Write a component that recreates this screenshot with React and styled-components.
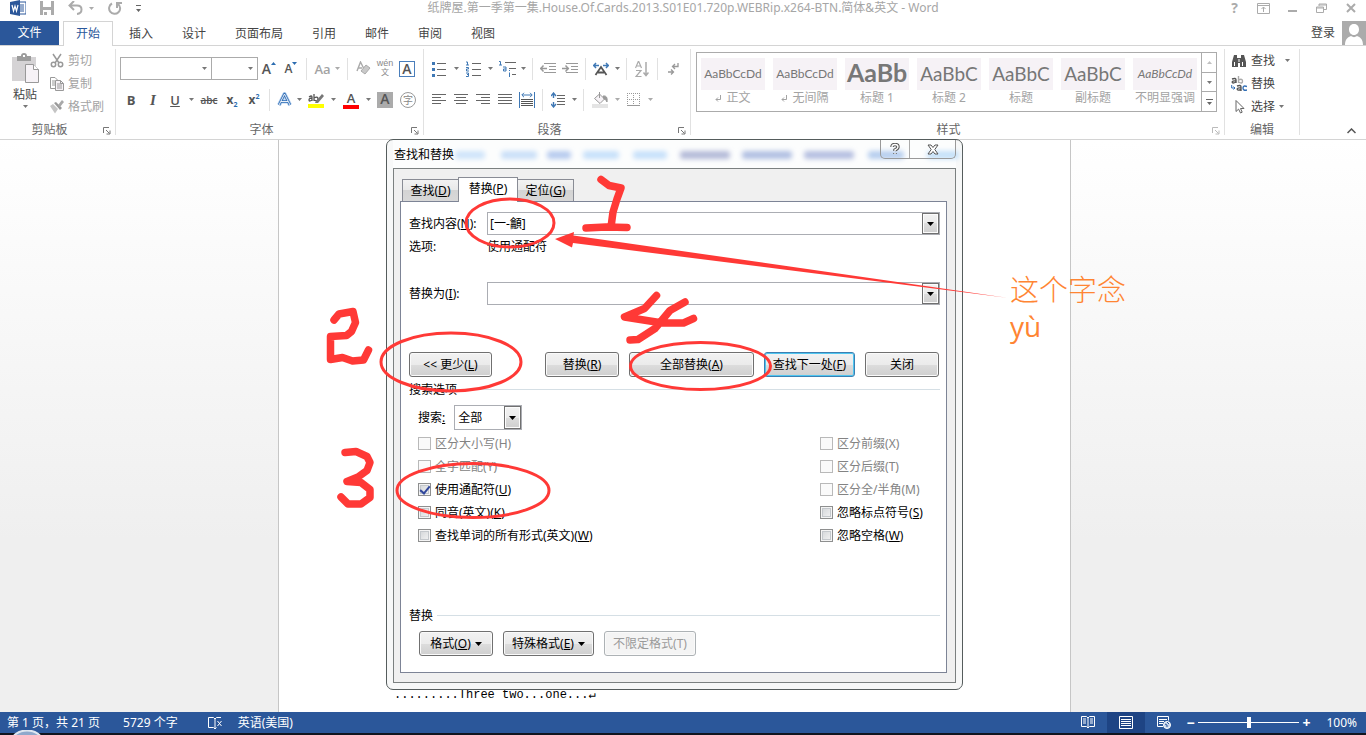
import React from 'react';
import styled, { createGlobalStyle, css } from 'styled-components';

const GlobalStyle = createGlobalStyle`
* {
  box-sizing: border-box;
}

body {
  margin: 0;
  font-family: "Noto Sans", "Noto Sans CJK SC", sans-serif;
  font-size: 12px;
  line-height: 16px;
  color: #444;
  overflow: hidden;
}

button, input, select {
  font: inherit;
  color: inherit;
  margin: 0;
}
`

const Window = styled.div`
display: flex;
flex-direction: column;
height: 100vh;
background: #fff;
`

/* title bar */

const TitleBar = styled.header`
display: grid;
grid-template-columns: 1fr auto 1fr;
align-items: center;
height: 21px;
padding-bottom: 6px;
background: #fff;
`

const QuickAccess = styled.div`
display: flex;
align-items: center;
padding-left: 10px;
gap: 14px;
`

const Title = styled.div`
color: #a6a6a6;
white-space: nowrap;
`

const WindowButtons = styled.div`
display: flex;
justify-content: flex-end;
padding-right: 1px;
`

const PlainButton = styled.button`
display: flex;
align-items: center;
justify-content: ${p => p.$start ? 'flex-start' : 'center'};
gap: ${p => p.$gap || 0}px;
width: ${p => p.$w ? p.$w + 'px' : 'auto'};
height: ${p => p.$h ? p.$h + 'px' : 'auto'};
padding: 0;
border: 0;
background: none;
white-space: nowrap;
color: ${p => p.$off ? '#a3a3a3' : '#444'};

&:hover {
    background: #d5e1f2;
    cursor: pointer;
  }
`

/* tabs */

const TabBar = styled.nav`
display: flex;
align-items: flex-end;
height: 25px;
border-bottom: 1px solid #d4d4d4;
`

const FileTab = styled.button`
width: 59px;
height: 24px;
margin-right: 4px;
padding: 0;
border: 0;
background: #2b579a;
color: #fff;
`

const Tab = styled.button`
height: 25px;
margin: 0 1px -1px 0;
padding: 0 14px;
border: 0;
background: none;
color: #444;

${p => p.$active && css`
  padding: 0 12px;
  margin-right: 2px;
  border: 1px solid #d4d4d4;
  border-bottom: 0;
  background: #fff;
  color: #2b579a;
`}
`

const Account = styled.div`
display: flex;
align-items: center;
gap: 7px;
margin-left: auto;
`

/* ribbon */

const Ribbon = styled.section`
display: flex;
height: 94px;
border-bottom: 1px solid #d4d4d4;
background: #fff;
`

const Group = styled.div`
position: relative;
display: flex;
flex-direction: column;
width: ${p => p.$w}px;
margin: 3px 0 4px;
padding: ${p => p.$pad || '0 4px'};
border-right: 1px solid #e1e1e1;
`

const GroupBody = styled.div`
display: flex;
flex: 1;
flex-direction: ${p => p.$column ? 'column' : 'row'};
gap: ${p => p.$gap || 0}px;
padding-top: ${p => p.$top || 0}px;
`

const GroupName = styled.div`
height: 12px;
line-height: 14px;
text-align: center;
color: #666;
padding-right: ${p => p.$shift || 0}px;
`

const Launcher = styled.button`
position: absolute;
right: 4px;
bottom: 0;
width: 8px;
height: 8px;
padding: 0;
border: 0;
background: none;
display: flex;
color: ${p => p.$off ? '#bbb' : '#777'};
`

const Row = styled.div`
display: flex;
align-items: center;
height: 23px;
`

const Sep = styled.div`
width: 1px;
height: 22px;
margin: 0 4px;
background: #e1e1e1;
`

const Column = styled.div`
display: flex;
flex-direction: column;
`

const PasteButton = styled(PlainButton)`
flex-direction: column;
align-items: center;
justify-content: flex-start;
width: 42px;
padding-top: 4px;
line-height: 20px;
`

const FontSelect = styled.select`
appearance: none;
width: ${p => p.$w}px;
height: 23px;
border: 1px solid #ababab;
border-radius: 0;
background: #fff;
`

const SelectBox = styled.label`
display: grid;
align-items: center;
justify-items: end;
margin-right: ${p => p.$join ? -1 : 0}px;

& > * {
  grid-area: 1 / 1;
}

& > svg {
  margin-right: 5px;
  pointer-events: none;
}
`

const Letter = styled.span`
font-size: ${p => p.$size || 14}px;
font-weight: ${p => p.$bold ? 700 : 600};
font-style: ${p => p.$italic ? 'italic' : 'normal'};
font-family: ${p => p.$serif ? '"Liberation Serif", serif' : '"Open Sans", sans-serif'};
text-decoration: ${p => p.$deco || 'none'};
line-height: 14px;
color: ${p => p.$color || '#555'};
border-bottom: ${p => p.$bar ? '4px solid ' + p.$bar : '0'};
padding: 0 ${p => p.$bar ? 4 : 0}px;

sub, sup {
  font-size: 7px;
  line-height: 0;
  color: #2b6cb0;
}
`

const BoxedA = styled(Letter)`
width: 16px;
height: 16px;
line-height: 14px;
text-align: center;
border: ${p => p.$fill ? '0' : '1px solid #4a7ebb'};
background: ${p => p.$fill || '#fff'};
`

const Circled = styled.span`
width: 16px;
height: 16px;
border: 1px solid #999;
border-radius: 8px;
font-size: 10px;
line-height: 14px;
color: #888;
`

const Pinyin = styled.span`
display: flex;
flex-direction: column;
align-items: center;
font-family: "Liberation Sans", "Noto Sans CJK SC", sans-serif;
font-size: 9px;
line-height: 8px;
color: #888;

span + span {
  font-size: 8px;
  line-height: 12px;
}
`

const Gallery = styled.div`
display: flex;
width: 100%;
height: 60px;
margin-top: 3px;
border: 1px solid #ababab;
`

const StyleItem = styled.button`
display: flex;
flex: 1;
flex-direction: column;
align-items: center;
min-width: 0;
padding: 5px 4px 0;
border: 0;
background: none;
color: #a3a3a3;
line-height: 16px;
white-space: nowrap;
`

const Sample = styled.span`
width: 100%;
height: 32px;
overflow: hidden;
background: #f6f2f6;
color: #777;
font-family: Lato, "Open Sans", sans-serif;
line-height: ${p => p.$size > 20 ? 28 : 32}px;
font-size: ${p => p.$size || 12}px;
font-weight: ${p => p.$bold ? 700 : 400};
font-style: ${p => p.$italic ? 'italic' : 'normal'};
`

const GalleryScroll = styled.div`
display: flex;
flex-direction: column;
width: 15px;
border-left: 1px solid #ababab;

button {
  flex: 1;
  border-bottom: 1px solid #ababab;
}

button:last-child {
  border-bottom: 0;
}
`

const Collapse = styled.div`
display: flex;
flex: 1;
align-items: flex-end;
justify-content: flex-end;
padding: 0 10px 5px;
`

/* document */

const Workspace = styled.main`
position: relative;
display: flex;
flex: 1;
justify-content: center;
padding-right: 17px;
background: linear-gradient(#fff, #efefef 70%);
`

const Page = styled.article`
display: flex;
align-items: flex-end;
width: 58%;
min-width: 793px;
padding: 0 115px 9px;
border: 1px solid #c6c6c6;
border-width: 0 1px;
background: #fff;
color: #000;
font-family: "Liberation Mono", monospace;
line-height: 16px;
`

/* find and replace */

const Dialog = styled.div`
position: absolute;
top: -1px;
width: 577px;
padding: 0 6px 6px;
border: 1px solid #555c5c;
border-radius: 7px;
background: #f7f8f8;
color: #000;
`

const DialogTitle = styled.div`
display: flex;
align-items: flex-start;
justify-content: space-between;
height: 28px;
background: #fcfdfd;
`

const DialogName = styled.h1`
position: relative;
margin: 7px 0 0 1px;
font-size: 12px;
font-weight: 400;
line-height: 16px;
`

const Haze = styled.svg`
position: absolute;
left: 64px;
top: 4px;
`

const CaptionButtons = styled.div`
position: relative;
display: flex;
height: 19px;
border: 1px solid #999;
border-top: 0;
border-radius: 0 0 5px 5px;

button {
  width: 28px;
}

button + button {
  width: 46px;
  border-left: 1px solid #aaa;
}
`

const DialogBody = styled.div`
padding: 8px 8px 9px 6px;
border: 1px solid #7b8080;
background: #f0f0f0;
`

const DialogTabs = styled.div`
display: flex;
align-items: flex-end;
height: 24px;
padding-left: 2px;
`

const DialogTab = styled.button`
height: 22px;
width: 56px;
padding: 0;
border: 1px solid #898c95;
border-left-width: ${p => p.$last ? 0 : 1}px;
border-right-width: ${p => p.$last ? 1 : 0}px;
border-bottom: 0;
background: linear-gradient(#f2f2f2, #e8e8e8 50%, #d4d4d4 50%, #d8d8d8);

${p => p.$active && css`
  width: 60px;
  height: 25px;
  margin-bottom: -1px;
  padding-bottom: 2px;
  border-width: 1px 1px 0;
  background: #fff;
  z-index: 1;
`}
`

const Panel = styled.div`
padding: 10px 6px 16px 8px;
border: 1px solid #7d8496;
background: #fff;
`

const Field = styled.div`
display: flex;
align-items: center;
height: 23px;
margin-top: ${p => p.$top || 0}px;

& > label, & > span:first-child {
  width: 78px;
}
`

const ComboBox = styled.div`
display: flex;
flex: 1;
height: 23px;
border: 1px solid #abadb3;

input {
  flex: 1;
  min-width: 0;
  padding: 0 2px;
  border: 0;
  outline: 0;
}
`

const dropFace = css`
display: flex;
align-items: center;
justify-content: center;
width: 17px;
padding: 0;
border: 1px solid #707070;
background: linear-gradient(#f2f2f2, #ebebeb 50%, #dddddd 50%, #cfcfcf);
box-shadow: inset 0 0 0 1px #fcfcfc;
`

const DropButton = styled.button`
${dropFace}
`

const Buttons = styled.div`
display: flex;
gap: 10px;
margin: ${p => p.$m};
`

const PushButton = styled.button`
display: flex;
align-items: center;
justify-content: center;
gap: 4px;
width: ${p => p.$w}px;
height: 25px;
padding: 0;
border: 1px solid #707070;
border-radius: 3px;
background: linear-gradient(#f2f2f2, #ebebeb 50%, #dddddd 50%, #cfcfcf);
box-shadow: inset 0 0 0 1px ${p => p.$main ? '#4fc6f0' : '#fafafa'};
border-color: ${p => p.$main ? '#3c7fb1' : '#707070'};
margin-right: ${p => p.$push ? 'auto' : 0};

&:disabled {
  border-color: #adb2b5;
  background: #f4f4f4;
  color: #9a9a9a;
}
`

const Legend = styled.h2`
display: flex;
align-items: center;
gap: ${p => p.$gap || 0}px;
margin: ${p => p.$top}px 0 0;
font-size: 12px;
font-weight: 400;
line-height: 13px;

&:after {
  content: "";
  flex: 1;
  height: 1px;
  background: #d5dfe5;
}
`

const SearchRow = styled.div`
display: flex;
align-items: center;
gap: 9px;
margin: 9px 0 2px 9px;
`

const SearchSelect = styled.div`
display: grid;
height: 25px;
border: 1px solid #abadb3;

& > * {
  grid-area: 1 / 1;
}

select {
  appearance: none;
  width: 66px;
  padding: 0 3px;
  border: 0;
  background: #fff;
}
`

const SelectArrow = styled.span`
${dropFace}
justify-self: end;
pointer-events: none;
`

const Checks = styled.div`
display: grid;
grid-template-columns: 1fr 120px;
margin-left: 9px;
`

const CheckLabel = styled.label`
display: flex;
align-items: center;
gap: 4px;
height: 23px;
color: ${p => p.$off ? '#838383' : '#000'};
`

const CheckInput = styled.input`
appearance: none;
display: grid;
place-items: center;
width: 13px;
height: 13px;
border: 1px solid #8e8f8f;
background: linear-gradient(135deg, #d0d3d6, #f6f6f6);
box-shadow: inset 0 0 0 1px #f4f4f4, inset 0 0 0 2px #c4c8cc;

&:disabled {
  border-color: #b9b9b9;
  background: #fafafa;
  box-shadow: none;
}

&:checked:after {
  content: "";
  width: 4px;
  height: 8px;
  margin-top: -2px;
  border: solid #31479c;
  border-width: 0 2px 2px 0;
  transform: rotate(40deg);
}
`

/* pen marks */

const Ink = styled.svg`
position: absolute;
left: 0;
top: 0;
overflow: visible;
pointer-events: none;
z-index: 2;
`

const Note = styled.div`
position: absolute;
left: 623px;
top: 132px;
font-size: 29px;
font-weight: 300;
line-height: 36px;
white-space: nowrap;
color: #ff8533;

span {
  display: block;
  font-family: "Open Sans", sans-serif;
  font-size: 28px;
  font-weight: 400;
}
`

/* status bar */

const StatusBar = styled.footer`
position: relative;
display: flex;
align-items: center;
justify-content: space-between;
height: 23px;
padding: 0 9px 0 7px;
border-bottom: 2px solid #10151f;
background: #2b579a;
color: #fff;
`

const StatusSide = styled.div`
display: flex;
align-items: center;
height: 21px;
gap: ${p => p.$gap || 0}px;
`

const ViewButton = styled.button`
display: flex;
align-items: center;
justify-content: center;
width: 38px;
height: 21px;
padding: 0;
border: 0;
background: ${p => p.$active ? '#1e4484' : 'none'};
`

const ZoomButton = styled.button`
width: 15px;
padding: 0;
border: 0;
background: none;
font-size: 14px;
font-weight: 700;
line-height: 16px;
color: #fff;
`

const ZoomSlider = styled.input`
appearance: none;
width: 101px;
height: 12px;
background: linear-gradient(#fff, #fff) center / 100% 1px no-repeat;

&::-webkit-slider-thumb {
  appearance: none;
  width: 4px;
  height: 11px;
  background: #fff;
}
`

const ZoomValue = styled.span`
width: 43px;
text-align: right;
`

const Orb = styled.svg`
position: absolute;
left: 12px;
bottom: -2px;
`

const Icon = ({ w = 16, h = 16, children, ...rest }) => (
    <svg width={w} height={h} viewBox={`0 0 ${w} ${h}`} fill="none" stroke="currentColor" aria-hidden="true" {...rest}>
        {children}
    </svg>
)

const Caret = ({ color = '#777' }) => (
    <Icon w={5} h={3} stroke="none"><path d="M0 0h5L2.500 3z" fill={color}/></Icon>
)

const DropMark = () => (
    <Icon w={7} h={4} stroke="none"><path d="M0 0h7L3.500 4z" fill="#000"/></Icon>
)

const LauncherIcon = () => (
    <Icon w={8} h={8}><path d="M.5 6V.5H6M3 3l3.500 3.500M7 3.500V7H3.500"/></Icon>
)

const SizeMark = ({ d }) => (
    <Icon w={5} h={14} stroke="none"><path d={d} fill="#2b6cb0"/></Icon>
)

const Lines = ({ d, h = 14 }) => (
    <Icon w={14} h={h} stroke="#666" shapeRendering="crispEdges"><path d={d}/></Icon>
)

const Tool = ({ w = 22, label, children }) => (
    <PlainButton $w={w} $h={22} aria-label={label}>{children}</PlainButton>
)

const CaretTool = ({ w = 12, color }) => <Tool w={w} label="更多"><Caret color={color}/></Tool>

const tabs = ['插入', '设计', '页面布局', '引用', '邮件', '审阅', '视图']

const styleItems = [
    { name: '正文', sample: 'AaBbCcDd', mark: true },
    { name: '无间隔', sample: 'AaBbCcDd', mark: true },
    { name: '标题 1', sample: 'AaBb', size: 25, bold: true },
    { name: '标题 2', sample: 'AaBbC', size: 19 },
    { name: '标题', sample: 'AaBbC', size: 19 },
    { name: '副标题', sample: 'AaBbC', size: 19 },
    { name: '不明显强调', sample: 'AaBbCcDd', italic: true }
]

const checks = [
    { text: '区分大小写', k: 'H', off: true }, { text: '区分前缀', k: 'X', off: true },
    { text: '全字匹配', k: 'Y', off: true }, { text: '区分后缀', k: 'T', off: true },
    { text: '使用通配符', k: 'U', on: true }, { text: '区分全/半角', k: 'M', off: true },
    { text: '同音(英文)', k: 'K' }, { text: '忽略标点符号', k: 'S' },
    { text: '查找单词的所有形式(英文)', k: 'W' }, { text: '忽略空格', k: 'W' }
]

const haze = [
    [4, 30, '#cfe4fa'], [50, 36, '#c9dff8'], [96, 24, '#b6caee'], [132, 36, '#c6e0fa'], [182, 34, '#c6e0fa'],
    [229, 50, '#b3bad8'], [291, 50, '#b0bfe2'], [353, 50, '#b4bee0'], [417, 36, '#b5cdee'], [476, 32, '#c4e0f8']
]

const TopBar = () => (
    <TitleBar>
        <QuickAccess>
            <Icon stroke="none">
                <path d="M9 2h7v12H9z" fill="#fff" stroke="#2b579a"/>
                <path d="M10 5h4M10 7h4M10 9h4M10 11h4" stroke="#2b579a"/>
                <path d="M0 2l10-2v16L0 14z" fill="#2b579a"/>
                <path d="M2 5l1.500 6L5 6l1.500 5L8 5" stroke="#fff" strokeWidth="1.200" fill="none"/>
            </Icon>
            <PlainButton aria-label="保存">
                <Icon w={14} h={14} stroke="none">
                    <path d="M0 0h14v14H0z" fill="#ababab"/>
                    <path d="M3 0h8v6H3zM3 9h8v5H3z" fill="#fff"/>
                    <path d="M4 11h3v3H4z" fill="#ababab"/>
                </Icon>
            </PlainButton>
            <PlainButton aria-label="撤消" $gap={6}>
                <Icon w={15} h={14} stroke="#ababab" strokeWidth="2"><path d="M6 0L1.500 4.500 6 9M2 4.500h7c6 0 6 8 0 8.500"/></Icon>
                <Caret color="#ababab"/>
            </PlainButton>
            <PlainButton aria-label="恢复">
                <Icon w={14} h={14} stroke="#ababab" strokeWidth="2"><path d="M4 2.500a5.500 5.500 0 1 0 6 .5M9 7V2h5"/></Icon>
            </PlainButton>
            <PlainButton aria-label="自定义快速访问工具栏">
                <Icon w={5} h={7} stroke="none"><path d="M0 0h5v1H0zM0 4h5L2.500 7z" fill="#666"/></Icon>
            </PlainButton>
        </QuickAccess>
        <Title>纸牌屋.第一季第一集.House.Of.Cards.2013.S01E01.720p.WEBRip.x264-BTN.简体&amp;英文 - Word</Title>
        <WindowButtons>
            <PlainButton $w={29} aria-label="帮助"><Letter $bold $color="#ababab">?</Letter></PlainButton>
            <PlainButton $w={29} aria-label="功能区显示选项">
                <Icon w={13} h={11} stroke="#ababab"><path d="M.5.5h12v10H.5zM.5 2.500h12M6.500 9V4M4.500 6l2-2 2 2"/></Icon>
            </PlainButton>
            <PlainButton $w={29} aria-label="最小化"><Icon w={9} h={11} stroke="#ababab" strokeWidth="2"><path d="M0 8h9"/></Icon></PlainButton>
            <PlainButton $w={29} aria-label="还原">
                <Icon w={11} h={10} stroke="#ababab"><path d="M3 3V1h7.500v5.500H8M.5 4h7v5.500h-7zM.5 5h7M3 2h7"/></Icon>
            </PlainButton>
            <PlainButton $w={29} aria-label="关闭"><Icon w={10} h={10} stroke="#ababab" strokeWidth="2"><path d="M1 1l8 8M9 1L1 9"/></Icon></PlainButton>
        </WindowButtons>
    </TitleBar>
)

const Clipboard = () => (
    <Group $w={116} $pad="0 4px">
        <GroupBody $gap={4}>
            <PasteButton>
                <Icon w={28} h={32} stroke="none">
                    <path d="M1 4h24v24H1z" fill="#d5d3d5"/>
                    <path d="M6 3h4a3 3 0 0 1 6 0h4v5H6z" fill="#9c9c9c"/>
                    <path d="M12 2h2v2h-2z" fill="#fff"/>
                    <path d="M14.500 11.500h8l5 5v13h-13z" fill="#f6f2f6" stroke="#999"/>
                    <path d="M22.500 11.500v5h5" fill="#fff" stroke="#999"/>
                </Icon>
                粘贴
                <Caret/>
            </PasteButton>
            <Column>
                <PlainButton $off $h={23} $gap={4} $start>
                    <Icon w={14} h={15} stroke="#999" strokeWidth="1.500">
                        <path d="M3 1l6 9M11 1L5 10"/><circle cx="3.500" cy="11.500" r="2.200"/><circle cx="10.500" cy="11.500" r="2.200"/>
                    </Icon>
                    剪切
                </PlainButton>
                <PlainButton $off $h={23} $gap={4} $start>
                    <Icon w={14} h={14} stroke="#999">
                        <path d="M5 11.500H.5V.5H5L7.500 3M2 4h3M2 6h3M2 8h3"/>
                        <path d="M5.500 3.500h5l3 3v7h-8z" fill="#f6f2f6"/><path d="M7 7h5M7 9h5M7 11h5M10.500 3.500v3h3"/>
                    </Icon>
                    复制
                </PlainButton>
                <PlainButton $off $h={23} $gap={4} $start>
                    <Icon w={14} h={14} stroke="none">
                        <path d="M0 6l3-2 5 5-3 4.500z" fill="#c4c4c4"/><path d="M4 3l2-1 6 6-2 2z" fill="#999"/>
                        <path d="M8 5l4-5 2 2-4 5z" fill="#a9a9a9"/>
                    </Icon>
                    格式刷
                </PlainButton>
            </Column>
        </GroupBody>
        <GroupName $shift={16}>剪贴板</GroupName>
        <Launcher aria-label="剪贴板选项"><LauncherIcon/></Launcher>
    </Group>
)

const FontGroup = () => (
    <Group $w={308}>
        <GroupBody $column $gap={8} $top={8}>
            <Row>
                <SelectBox $join><FontSelect $w={92} aria-label="字体"/><Caret/></SelectBox>
                <SelectBox><FontSelect $w={47} aria-label="字号"/><Caret/></SelectBox>
                <Tool label="增大字号"><Letter $size={14}>A</Letter><SizeMark d="M0 3h5L2.500 0z"/></Tool>
                <Tool label="减小字号"><Letter $size={12}>A</Letter><SizeMark d="M0 0h5L2.500 3z"/></Tool>
                <Sep/>
                <PlainButton $w={32} $gap={4} aria-label="更改大小写"><Letter $size={13} $color="#a3a3a3">Aa</Letter><Caret color="#ababab"/></PlainButton>
                <Sep/>
                <Tool label="清除所有格式">
                    <Icon w={15} h={15} stroke="#aaa"><path d="M1 10L4.500 1 8 8M2.500 7H6" strokeWidth="1.400"/><path d="M5 10l5-6 4 3-5 6z" fill="#c9c9c9"/></Icon>
                </Tool>
                <Tool label="拼音指南"><Pinyin><span>wén</span><span>文</span></Pinyin></Tool>
                <Tool label="字符边框"><BoxedA>A</BoxedA></Tool>
            </Row>
            <Row>
                <Tool><Letter $bold $size={13}>B</Letter></Tool>
                <Tool><Letter $serif $italic $size={15}>I</Letter></Tool>
                <Tool><Letter $deco="underline" $size={13}>U</Letter></Tool>
                <CaretTool w={11}/>
                <Tool w={24}><Letter $deco="line-through" $size={10}>abc</Letter></Tool>
                <Tool><Letter $bold $size={12}>x<sub>2</sub></Letter></Tool>
                <Tool><Letter $bold $size={12}>x<sup>2</sup></Letter></Tool>
                <Sep/>
                <Tool w={20} label="文本效果">
                    <Icon w={15} h={15} strokeLinejoin="round">
                        <path d="M2 13L7.500 2 13 13M4 9.500h7" stroke="#b9d3f0" strokeWidth="4"/>
                        <path d="M2 13L7.500 2 13 13M4 9.500h7" stroke="#2f6db5" strokeWidth="2.600"/>
                        <path d="M2 13L7.500 2 13 13M4 9.500h7" stroke="#fff" strokeWidth=".9"/>
                    </Icon>
                </Tool>
                <CaretTool w={10}/>
                <Tool w={24} label="突出显示">
                    <Icon w={16} h={16} stroke="none">
                        <path d="M0 12h16v4H0z" fill="#ff0"/>
                        <path d="M1 5q3-2 3 0v4M4 6q-3 0-3 2t3 0M6 2v7M6 6q4-2 4 1t-4 1" stroke="#555" strokeWidth="1.300" fill="none"/>
                        <path d="M8 9l6-7 2 2-6 7H7z" fill="#777"/>
                    </Icon>
                </Tool>
                <CaretTool w={11}/>
                <Tool w={24}><Letter $bar="#f00" $size={13}>A</Letter></Tool>
                <CaretTool w={10}/>
                <Tool w={24}><BoxedA $fill="#ababab">A</BoxedA></Tool>
                <Tool><Circled>字</Circled></Tool>
            </Row>
        </GroupBody>
        <GroupName $shift={16}>字体</GroupName>
        <Launcher aria-label="字体选项"><LauncherIcon/></Launcher>
    </Group>
)

const ParagraphGroup = () => (
    <Group $w={267} $pad="0 3px 0 4px">
        <GroupBody $column $gap={8} $top={8}>
            <Row>
                <Tool label="项目符号">
                    <Icon w={14} h={16} stroke="#666"><path d="M5 2.500h9M5 8.500h9M5 14.500h9"/><path d="M0 1h3v3H0zM0 7h3v3H0zM0 13h3v3H0z" fill="#3f78b5" stroke="none"/></Icon>
                </Tool>
                <CaretTool/>
                <Tool label="编号">
                    <Icon w={15} h={16} stroke="#666"><path d="M6 2.500h9M6 8.500h9M6 14.500h9"/><path d="M0 1h1.500v3M0 4h3M0 6.500h2.500v1.500H.5v2H3M0 12h2.500v3.500H0M1 13.500h1.500" stroke="#3f78b5"/></Icon>
                </Tool>
                <CaretTool/>
                <Tool label="多级列表">
                    <Icon w={17} h={16} stroke="#666"><path d="M6 1.500h11M10 7.500h7M13 13.500h4"/><path d="M0 .5h1.500V4M0 4h3M4 6h3v4H4.500V8H7M10.500 9v1M10.500 11.500V16" stroke="#3f78b5"/></Icon>
                </Tool>
                <CaretTool w={10}/>
                <Sep/>
                <Tool label="减少缩进">
                    <Icon w={16} h={11} stroke="#999"><path d="M4 .5h12M9 3.500h7M9 6.500h7M4 9.500h12"/><path d="M0 5.500h7M3.500 2.500L.7 5.500l2.800 3" strokeWidth="1.500"/></Icon>
                </Tool>
                <Tool label="增加缩进">
                    <Icon w={16} h={11} stroke="#999"><path d="M4 .5h12M9 3.500h7M9 6.500h7M4 9.500h12"/><path d="M0 5.500h7M3.500 2.500l2.800 3-2.800 3" strokeWidth="1.500"/></Icon>
                </Tool>
                <Sep/>
                <Tool label="中文版式">
                    <Icon w={16} h={14}><path d="M0 3.500h6M3 1L.7 3.500 3 6M16 3.500h-6M13 1l2.300 2.500L13 6" stroke="#3f78b5" strokeWidth="1.500"/><path d="M2.500 13L8 5l5.500 8M5 10.500h6" stroke="#555" strokeWidth="1.800"/></Icon>
                </Tool>
                <CaretTool w={10}/>
                <Sep/>
                <Tool label="排序">
                    <Icon w={14} h={16} stroke="#aaa"><path d="M.5 7L3.500 0l3 7M2 5h3.500M1 9.500h5l-5 6h5.500" strokeWidth="1.200"/><path d="M11 1v13M8.500 11.500L11 14.500l2.500-3" strokeWidth="1.500"/></Icon>
                </Tool>
                <Sep/>
                <Tool label="显示编辑标记">
                    <Icon w={11} h={12} stroke="#999" strokeWidth="1.300"><path d="M10 0v3.500H5M7 1L4.500 3.500 7 6M0 9h5M3 6.500L5.500 9 3 11.500"/></Icon>
                </Tool>
            </Row>
            <Row>
                <Tool label="左对齐"><Lines d="M0 1.500h14M0 4.500h9M0 7.500h14M0 10.500h9"/></Tool>
                <Tool label="居中"><Lines d="M0 1.500h14M2 4.500h10M0 7.500h14M2 10.500h10"/></Tool>
                <Tool label="右对齐"><Lines d="M0 1.500h14M5 4.500h9M0 7.500h14M5 10.500h9"/></Tool>
                <Tool label="两端对齐"><Lines d="M0 1.500h14M0 4.500h14M0 7.500h14M0 10.500h14"/></Tool>
                <Tool label="分散对齐">
                    <Icon w={16} h={16}><path d="M2 7.500h12M2 9.500h12M2 11.500h12M2 13.500h12" stroke="#555"/><path d="M.5 0v16M15.500 0v16M3 3h10M5 .8L2.800 3 5 5.200M11 .8L13.200 3 11 5.200" stroke="#3f78b5"/></Icon>
                </Tool>
                <Sep/>
                <Tool label="行距">
                    <Icon w={14} h={16}><path d="M6 3.500h8M6 6.500h8M6 9.500h8M6 12.500h8" stroke="#666"/><path d="M2.500 1v5M0 4l2.500-3L5 4M2.500 10v5M0 12l2.500 3L5 12" stroke="#3f78b5" strokeWidth="1.400"/></Icon>
                </Tool>
                <CaretTool w={10}/>
                <Sep/>
                <Tool w={24} label="底纹">
                    <Icon w={16} h={16} stroke="#999"><path d="M2.500 6.500L7.500 2l5 5-4.500 4.500zM7.500 0v6" fill="#f6f2f6"/><path d="M11 4q5-1 4 6-1-3-3-3z" fill="#999"/><path d="M0 12h16v4H0z" fill="#e4e4e4" stroke="none"/></Icon>
                </Tool>
                <CaretTool w={10} color="#ababab"/>
                <Tool label="边框">
                    <Icon w={13} h={13} stroke="#999"><path d="M.5 0v12M6.500 0v12M12.500 0v12M0 .5h13M0 6.500h13" strokeDasharray="1 1"/><path d="M0 12.500h13"/></Icon>
                </Tool>
                <CaretTool color="#ababab"/>
            </Row>
        </GroupBody>
        <GroupName $shift={16}>段落</GroupName>
        <Launcher aria-label="段落选项"><LauncherIcon/></Launcher>
    </Group>
)

const StylesGroup = () => (
    <Group $w={534} $pad="0 7px 0 5px">
        <GroupBody>
            <Gallery>
                {styleItems.map(s => (
                    <StyleItem key={s.name}>
                        <Sample $size={s.size} $bold={s.bold} $italic={s.italic}>{s.sample}</Sample>
                        <span>
                            {s.mark && <Icon w={11} h={7} stroke="#a3a3a3"><path d="M5.500 0v4.500H1M3 2.500l-2 2 2 2"/></Icon>}
                            {s.name}
                        </span>
                    </StyleItem>
                ))}
                <GalleryScroll>
                    <PlainButton aria-label="上一行"><Icon w={5} h={3} stroke="none"><path d="M0 3h5L2.500 0z" fill="#c0c0c0"/></Icon></PlainButton>
                    <PlainButton aria-label="下一行"><Caret/></PlainButton>
                    <PlainButton aria-label="其他"><Icon w={7} h={6} stroke="none"><path d="M0 0h7v1H0zM1 3h5L3.500 6z" fill="#666"/></Icon></PlainButton>
                </GalleryScroll>
            </Gallery>
        </GroupBody>
        <GroupName $shift={16}>样式</GroupName>
        <Launcher $off aria-label="样式选项"><LauncherIcon/></Launcher>
    </Group>
)

const EditGroup = () => (
    <Group $w={75} $pad="0 0 0 6px">
        <GroupBody $column>
            <PlainButton $h={23} $gap={4} $start>
                <Icon w={16} h={14} stroke="none">
                    <path d="M3 1h3v3h4V1h3l2 7v5H9V9H7v4H1V8z" fill="#555"/><path d="M7.500 5h1v3h-1zM3 8h1v4H3zM11 8h1v4h-1z" fill="#fff"/>
                </Icon>
                查找
                <Icon w={12} h={3} stroke="none"><path d="M6 0h5L8.500 3z" fill="#777"/></Icon>
            </PlainButton>
            <PlainButton $h={23} $gap={4} $start>
                <Icon w={16} h={16} strokeWidth="1.400">
                    <path d="M1 3q4-1.500 4 1v3M5 5Q1 4.500 1.200 6.200T5 6" stroke="#555"/><path d="M7.500 0v7M7.500 4q4-2 4 1.200T7.500 6" stroke="#aaa"/>
                    <path d="M6 10q4-1.500 4 1v4M10 12q-4-.5-3.800 1.200T10 13.500" stroke="#555"/><path d="M16 10.500q-4-1.500-4 1.500t4 2" stroke="#2f6db5"/>
                    <path d="M.7 9v3H4M2.500 10.500L4 12l-1.500 1.500" stroke="#2f6db5" strokeWidth="1"/>
                </Icon>
                替换
            </PlainButton>
            <PlainButton $h={23} $gap={4} $start>
                <Icon w={16} h={16} stroke="#666"><path d="M5 1.500v11l2.600-2.400L9.500 14l1.700-.8L9.500 9.500H13z"/></Icon>
                选择
                <Caret/>
            </PlainButton>
        </GroupBody>
        <GroupName $shift={6}>编辑</GroupName>
    </Group>
)

const Check = ({ item, id }) => (
    <CheckLabel $off={item.off} htmlFor={id}>
        <CheckInput id={id} type="checkbox" disabled={item.off} defaultChecked={item.on}/>
        <span>{item.text}({item.off ? item.k : <u>{item.k}</u>})</span>
    </CheckLabel>
)

const PenMarks = () => (
    <Ink width="575" height="549" stroke="#ff3936" fill="none" aria-hidden="true">
        <g transform="translate(-387 -140)" strokeLinecap="round" strokeLinejoin="round">
            <g strokeWidth="3">
                <ellipse cx="510" cy="223" rx="44" ry="24"/>
                <ellipse cx="451" cy="362" rx="70" ry="29"/>
                <ellipse cx="473" cy="490.500" rx="76" ry="27"/>
                <ellipse cx="700.500" cy="366" rx="70" ry="23.500"/>
            </g>
            <path d="M555 239l19-7-.5 3.500L1007 297.700 573 243l-1 4.500z" fill="#ff3936" stroke="none"/>
            <g strokeWidth="7.500">
                <path d="M601 179.500l8 6 12 2.500-4 11-4 13-2 15M586 228l20-1 21 .5"/>
                <path d="M334 320l5-6 14-2.500 2.500 11-4 9-5 4-16 1v23l12-2 10 3.500 11-1 5-10"/>
                <path d="M345 452.500l11-1 11 5 3 6-3 8-9 6.500-11 4.500 14 1 9 7v8l-9 6.500h-13l-7-7"/>
                <path d="M656.500 295.500l-12 13-20 8.500 38 6h21l10-4.500M685 302l-15 8.500-15 18-17 11-8 .5"/>
            </g>
        </g>
    </Ink>
)

const FindReplace = () => (
    <Dialog role="dialog" aria-labelledby="dlg-name">
        <DialogTitle>
            <Haze width="512" height="22" aria-hidden="true">
                <defs><filter id="haze" x="-20%" y="-80%" width="140%" height="260%"><feGaussianBlur stdDeviation="2.500"/></filter></defs>
                {haze.map(([x, w, c]) => <rect key={x} x={x} y="7" width={w} height="8" rx="3" fill={c} filter="url(#haze)"/>)}
            </Haze>
            <DialogName id="dlg-name">查找和替换</DialogName>
            <CaptionButtons>
                <PlainButton aria-label="帮助">
                    <Icon w={10} h={13}><path d="M2 4q0-2.500 3-2.500T8 4Q8 5.500 5 7v1M5 10v1" stroke="#555" strokeWidth="3.400"/><path d="M2 4q0-2.500 3-2.500T8 4Q8 5.500 5 7v1M5 10v1" stroke="#fff" strokeWidth="1.400"/></Icon>
                </PlainButton>
                <PlainButton aria-label="关闭">
                    <Icon w={12} h={11}><path d="M1 1h3l2 2.500L8 1h3L7.800 5.500 11 10H8L6 7.500 4 10H1l3.200-4.500z" fill="#fff" stroke="#555"/></Icon>
                </PlainButton>
            </CaptionButtons>
        </DialogTitle>
        <DialogBody>
            <DialogTabs role="tablist">
                <DialogTab role="tab">查找(<u>D</u>)</DialogTab>
                <DialogTab role="tab" aria-selected="true" $active>替换(<u>P</u>)</DialogTab>
                <DialogTab role="tab" $last>定位(<u>G</u>)</DialogTab>
            </DialogTabs>
            <Panel>
                <Field>
                    <label htmlFor="find">查找内容(<u>N</u>):</label>
                    <ComboBox><input id="find" defaultValue="[一-龥]"/><DropButton aria-label="查找记录"><DropMark/></DropButton></ComboBox>
                </Field>
                <Field><span>选项:</span><span>使用通配符</span></Field>
                <Field $top={24}>
                    <label htmlFor="replace">替换为(<u>I</u>):</label>
                    <ComboBox><input id="replace"/><DropButton aria-label="替换记录"><DropMark/></DropButton></ComboBox>
                </Field>
                <Buttons $m="47px 1px 0 0">
                    <PushButton $w={83} $push><span>&lt;&lt; 更少(<u>L</u>)</span></PushButton>
                    <PushButton $w={74}><span>替换(<u>R</u>)</span></PushButton>
                    <PushButton $w={125}><span>全部替换(<u>A</u>)</span></PushButton>
                    <PushButton $w={91} $main><span>查找下一处(<u>F</u>)</span></PushButton>
                    <PushButton $w={74}>关闭</PushButton>
                </Buttons>
                <Legend $top={6}>搜索选项</Legend>
                <SearchRow>
                    <label htmlFor="scope">搜索<u>:</u></label>
                    <SearchSelect>
                        <select id="scope"><option>全部</option></select>
                        <SelectArrow><DropMark/></SelectArrow>
                    </SearchSelect>
                </SearchRow>
                <Checks>
                    {checks.map((c, i) => <Check key={c.text} item={c} id={'check' + i}/>)}
                </Checks>
                <Legend $top={62} $gap={4}>替换</Legend>
                <Buttons $m="9px 0 0 10px">
                    <PushButton $w={74}><span>格式(<u>O</u>)</span><DropMark/></PushButton>
                    <PushButton $w={91}><span>特殊格式(<u>E</u>)</span><DropMark/></PushButton>
                    <PushButton $w={92} disabled>不限定格式(T)</PushButton>
                </Buttons>
            </Panel>
        </DialogBody>
        <PenMarks/>
        <Note>这个字念<span>yù</span></Note>
    </Dialog>
)

const Status = () => (
    <StatusBar>
        <StatusSide $gap={23}>
            <span>第 1 页，共 21 页</span>
            <span>5729 个字</span>
            <StatusSide $gap={15}>
                <Icon w={22} h={14} stroke="#fff"><path d="M14 1.500H9.500L8 3 6.500 1.500h-5v10h5L8 13l1.500-1.500M8 3v9M10.500 5l4 5M14.500 5l-4 5" transform="translate(6 0)"/></Icon>
                <span>英语(美国)</span>
            </StatusSide>
        </StatusSide>
        <StatusSide>
            <ViewButton aria-label="阅读视图">
                <Icon w={14} h={13} stroke="#fff"><path d="M7 2L5.500.5h-5v10h5L7 12l1.500-1.500h5V.5h-5zM7 2v10M2 3h3M2 5h3M2 7h3M9 3h3M9 5h3M9 7h3"/></Icon>
            </ViewButton>
            <ViewButton $active aria-label="页面视图">
                <Icon w={14} h={13} stroke="#fff"><path d="M.5.5h13v12H.5zM2 3.500h10M2 5.500h10M2 7.500h10M2 9.500h10"/></Icon>
            </ViewButton>
            <ViewButton aria-label="Web 版式视图">
                <Icon w={14} h={13} stroke="#fff"><path d="M6 10.500H.5V.5h11v4M2 3.500h8M2 5.500h5M2 7.500h4"/><circle cx="10" cy="9" r="3.500" fill="#c5d3ea"/><path d="M8 8l2 1v2M10 6l2 2" stroke="#2b579a"/></Icon>
            </ViewButton>
            <ZoomButton aria-label="缩小">−</ZoomButton>
            <ZoomSlider type="range" min="0" max="200" defaultValue="100" aria-label="显示比例"/>
            <ZoomButton aria-label="放大">+</ZoomButton>
            <ZoomValue>100%</ZoomValue>
        </StatusSide>
        <Orb width="30" height="5" aria-hidden="true">
            <ellipse cx="15" cy="11" rx="15" ry="10.500" fill="#8fa9cc" stroke="#dfe7f1" strokeWidth="2"/>
        </Orb>
    </StatusBar>
)

export default function App() {
    return (
        <Window>
            <GlobalStyle/>
            <TopBar/>
            <TabBar>
                <FileTab>文件</FileTab>
                <Tab $active>开始</Tab>
                {tabs.map(t => <Tab key={t}>{t}</Tab>)}
                <Account>
                    <PlainButton>登录</PlainButton>
                    <Icon w={24} h={24} stroke="none">
                        <path d="M0 0h24v24H0z" fill="#ababab"/>
                        <path d="M12 3c3.500 0 5 2.500 5 5.500S15 14 12 14s-5-2.500-5-5.500S8.500 3 12 3zM3 24c0-6 3-8 6-9 2 1.500 4 1.500 6 0 3 1 6 3 6 9z" fill="#fff"/>
                    </Icon>
                </Account>
            </TabBar>
            <Ribbon>
                <Clipboard/>
                <FontGroup/>
                <ParagraphGroup/>
                <StylesGroup/>
                <EditGroup/>
                <Collapse>
                    <PlainButton aria-label="折叠功能区"><Icon w={9} h={6} stroke="#555" strokeWidth="1.500"><path d="M.5 5l4-4 4 4"/></Icon></PlainButton>
                </Collapse>
            </Ribbon>
            <Workspace>
                <Page>.........Three two...one...↵</Page>
                <FindReplace/>
            </Workspace>
            <Status/>
        </Window>
    )
}
